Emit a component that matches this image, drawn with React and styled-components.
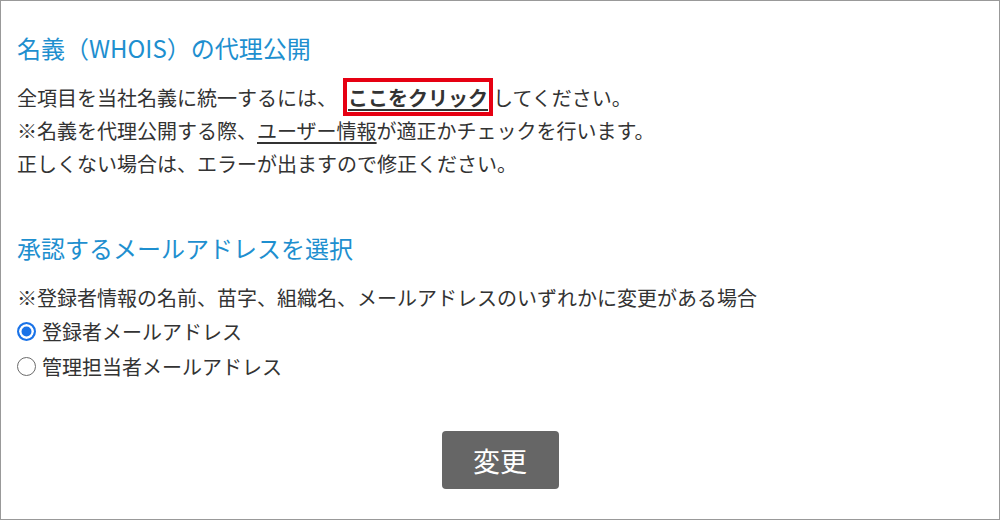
import React from "react";
import styled, { createGlobalStyle } from "styled-components";

const GlobalStyle = createGlobalStyle`
  html, body {
    margin: 0;
    padding: 0;
    background: #fff;
  }
  body {
    font-family: "Noto Sans CJK JP", "Noto Sans", sans-serif;
    color: #333;
  }
`;

const Frame = styled.div`
  box-sizing: border-box;
  width: 1000px;
  height: 520px;
  border: 1px solid #999;
  padding: 30px 16px 0 16px;
`;

const Section = styled.section`
  margin-bottom: ${(p) => p.gap || 0}px;
`;

const Heading = styled.h2`
  margin: 0 0 16px 0;
  font-size: 24px;
  font-weight: 400;
  line-height: 34px;
  color: #1e8fcf;
`;

const Line = styled.p`
  margin: 0;
  font-size: 20px;
  line-height: 33px;
  white-space: nowrap;
`;

const Underlined = styled.span`
  text-decoration: underline;
  text-underline-offset: 3px;
`;

const ClickLink = styled.a`
  margin-left: 6px;
  padding: 1px 1px 0 1px;
  border: 4px solid #e60012;
  font-weight: 700;
  color: #333;
  text-decoration: underline;
  text-underline-offset: 3px;
  text-decoration-thickness: 2px;
  cursor: pointer;
`;

const RadioLabel = styled.label`
  display: flex;
  align-items: center;
  gap: 6px;
  font-size: 20px;
  line-height: 35px;
  cursor: pointer;
`;

const RadioDot = styled.span`
  box-sizing: border-box;
  width: 19px;
  height: 19px;
  border-radius: 50%;
  border: ${(p) => (p.checked ? "2px solid #1a73e8" : "1.5px solid #6b6b6b")};
  background: ${(p) => (p.checked ? "#1a73e8" : "#fff")};
  box-shadow: ${(p) => (p.checked ? "inset 0 0 0 2.5px #fff" : "none")};
`;

const ButtonRow = styled.div`
  display: flex;
  justify-content: center;
  margin-top: 47px;
`;

const Button = styled.button`
  width: 117px;
  height: 58px;
  border: none;
  border-radius: 4px;
  background: #666;
  color: #fff;
  font-family: inherit;
  font-size: 27px;
  cursor: pointer;
`;

export default function App() {
  const [mail, setMail] = React.useState("registrant");

  return (
    <>
      <GlobalStyle />
      <Frame>
        <Section gap={51}>
          <Heading>名義（WHOIS）の代理公開</Heading>
          <Line>
            全項目を当社名義に統一するには、
            <ClickLink>ここをクリック</ClickLink>
            してください。
          </Line>
          <Line>
            ※名義を代理公開する際、<Underlined>ユーザー情報</Underlined>が適正かチェックを行います。
          </Line>
          <Line>正しくない場合は、エラーが出ますので修正ください。</Line>
        </Section>
        <Section>
          <Heading>承認するメールアドレスを選択</Heading>
          <Line>※登録者情報の名前、苗字、組織名、メールアドレスのいずれかに変更がある場合</Line>
          <RadioLabel onClick={() => setMail("registrant")}>
            <RadioDot checked={mail === "registrant"} />
            登録者メールアドレス
          </RadioLabel>
          <RadioLabel onClick={() => setMail("admin")}>
            <RadioDot checked={mail === "admin"} />
            管理担当者メールアドレス
          </RadioLabel>
        </Section>
        <ButtonRow>
          <Button>変更</Button>
        </ButtonRow>
      </Frame>
    </>
  );
}
